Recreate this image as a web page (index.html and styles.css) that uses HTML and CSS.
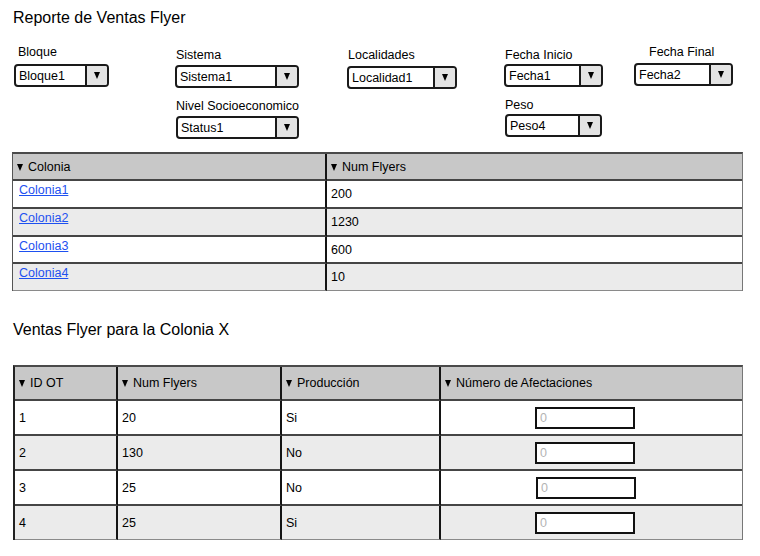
FILE: index.html
```html
<!DOCTYPE html>
<html lang="es">
<head>
<meta charset="utf-8">
<title>Reporte de Ventas Flyer</title>
<link rel="stylesheet" href="styles.css">
</head>
<body>
<div class="page">
  <h1 class="title">Reporte de Ventas Flyer</h1>

  <div class="filters">
    <div class="fcol col1">
      <div class="field f-bloque">
        <div class="label">Bloque</div>
        <div class="select w-bloque"><span class="value">Bloque1</span><span class="btn"><i class="tri"></i></span></div>
      </div>
    </div>
    <div class="fcol col2">
      <div class="field f-sistema">
        <div class="label">Sistema</div>
        <div class="select w-sistema"><span class="value">Sistema1</span><span class="btn"><i class="tri"></i></span></div>
      </div>
      <div class="field f-nivel">
        <div class="label">Nivel Socioeconomico</div>
        <div class="select w-nivel"><span class="value">Status1</span><span class="btn"><i class="tri"></i></span></div>
      </div>
    </div>
    <div class="fcol col3">
      <div class="field f-local">
        <div class="label">Localidades</div>
        <div class="select w-local"><span class="value">Localidad1</span><span class="btn"><i class="tri"></i></span></div>
      </div>
    </div>
    <div class="fcol col4">
      <div class="field f-inicio">
        <div class="label">Fecha Inicio</div>
        <div class="select w-fecha"><span class="value">Fecha1</span><span class="btn"><i class="tri"></i></span></div>
      </div>
      <div class="field f-peso">
        <div class="label">Peso</div>
        <div class="select w-peso"><span class="value">Peso4</span><span class="btn"><i class="tri"></i></span></div>
      </div>
    </div>
    <div class="fcol col5">
      <div class="field f-final">
        <div class="label">Fecha Final</div>
        <div class="select w-fecha"><span class="value">Fecha2</span><span class="btn"><i class="tri"></i></span></div>
      </div>
    </div>
  </div>

  <table class="grid t1">
    <colgroup><col class="t1c1"><col></colgroup>
    <thead>
      <tr><th><i class="tri"></i>Colonia</th><th><i class="tri"></i>Num Flyers</th></tr>
    </thead>
    <tbody>
      <tr class="r1"><td class="linkcell"><a href="#">Colonia1</a></td><td>200</td></tr>
      <tr class="alt r2"><td class="linkcell"><a href="#">Colonia2</a></td><td>1230</td></tr>
      <tr class="r3"><td class="linkcell"><a href="#">Colonia3</a></td><td>600</td></tr>
      <tr class="alt r4 last"><td class="linkcell"><a href="#">Colonia4</a></td><td>10</td></tr>
    </tbody>
  </table>

  <h2 class="subtitle">Ventas Flyer para la Colonia X</h2>

  <table class="grid t2">
    <colgroup><col class="t2c1"><col class="t2c2"><col class="t2c3"><col></colgroup>
    <thead>
      <tr><th><i class="tri"></i>ID OT</th><th><i class="tri"></i>Num Flyers</th><th><i class="tri"></i>Producción</th><th><i class="tri"></i>Número de Afectaciones</th></tr>
    </thead>
    <tbody>
      <tr><td>1</td><td>20</td><td>Si</td><td class="inputcell"><input class="num" type="text" placeholder="0"></td></tr>
      <tr class="alt"><td>2</td><td>130</td><td>No</td><td class="inputcell"><input class="num" type="text" placeholder="0"></td></tr>
      <tr><td>3</td><td>25</td><td>No</td><td class="inputcell"><input class="num shifted" type="text" placeholder="0"></td></tr>
      <tr class="alt last"><td>4</td><td>25</td><td>Si</td><td class="inputcell"><input class="num" type="text" placeholder="0"></td></tr>
    </tbody>
  </table>
</div>
</body>
</html>
```

FILE: styles.css
```css
* { box-sizing: border-box; }

html, body {
  margin: 0;
  padding: 0;
  background: #fff;
}

body {
  font-family: "Liberation Sans", Arial, Helvetica, sans-serif;
  font-size: 12.5px;
  color: #000;
}

.page {
  padding: 8px 0 0 12px;
}

.title,
.subtitle {
  margin: 0;
  font-size: 16px;
  font-weight: normal;
  line-height: 20px;
}

.title { padding-left: 1px; }

/* ---------- filters ---------- */
.filters {
  display: flex;
  align-items: flex-start;
}

.fcol {
  display: flex;
  flex-direction: column;
}

.col1 { width: 163px; }
.col2 { width: 172px; }
.col3 { width: 157px; }
.col4 { width: 130px; }
.col5 { width: 110px; }

.field { display: flex; flex-direction: column; }

.label {
  line-height: 15px;
  height: 15px;
  white-space: nowrap;
}

.f-bloque { margin-top: 17px; margin-left: 2px; }
.f-bloque .label { padding-left: 4px; margin-bottom: 4px; }

.f-sistema { margin-top: 19.5px; }
.f-sistema .label { padding-left: 1px; margin-bottom: 2.5px; }

.f-nivel { margin-top: 11px; margin-left: 1px; }
.f-nivel .label { margin-bottom: 2px; }

.f-local { margin-top: 19.5px; }
.f-local .label { padding-left: 1px; margin-bottom: 3.5px; }

.f-inicio { margin-top: 19.5px; }
.f-inicio .label { padding-left: 1px; margin-bottom: 1.5px; }

.f-peso { margin-top: 10.5px; margin-left: 1px; }
.f-peso .label { margin-bottom: 1.5px; }

.f-final { margin-top: 16.5px; }
.f-final .label { padding-left: 15px; margin-bottom: 3.5px; }

.select {
  display: flex;
  align-items: stretch;
  height: 23px;
  border: 2px solid #1a1a1a;
  border-radius: 4px;
  background: #fff;
  overflow: hidden;
}

.select .value {
  flex: 1;
  display: flex;
  align-items: center;
  padding-left: 3px;
  font-size: 12.5px;
  white-space: nowrap;
  overflow: hidden;
}

.select .btn {
  width: 22px;
  border-left: 2px solid #1a1a1a;
  background: #e3e3e3;
  display: flex;
  align-items: center;
  justify-content: center;
}

.select .btn .tri { margin: 0; }

.w-bloque { width: 95px; }
.w-sistema { width: 124px; }
.w-nivel { width: 123px; }
.w-local { width: 110px; }
.w-fecha { width: 99px; }
.w-peso { width: 97px; }

.tri {
  display: inline-block;
  width: 0;
  height: 0;
  border-left: 3.5px solid transparent;
  border-right: 3.5px solid transparent;
  border-top: 7px solid #000;
  margin-right: 5px;
  vertical-align: 0px;
}

/* ---------- tables ---------- */
.grid {
  border-collapse: separate;
  border-spacing: 0;
  table-layout: fixed;
  border-top: 2px solid #4a4a4a;
  border-left: 1px solid #555;
  border-right: 1px solid #777;
}

.grid th,
.grid td {
  padding: 0 4px;
  text-align: left;
  font-weight: normal;
  white-space: nowrap;
  vertical-align: middle;
  border-bottom: 2px solid #454545;
}

.grid th:not(:last-child),
.grid td:not(:last-child) {
  border-right: 2px solid #141414;
}

.grid th { background: #c8c8c8; }
.grid tr.alt td { background: #ebebeb; }
.grid tr.last td { border-bottom: 1px solid #8a8a8a; }

.t1 {
  width: 731px;
  margin-top: 13px;
}

.t1c1 { width: 314px; }

.t1 th { height: 27px; }
.t1 td { height: 28px; }
.t1 tr.r3 td { height: 27px; }
.t1 tr.last td { height: 27px; }

.t1 td.linkcell {
  vertical-align: top;
  padding-top: 2px;
  padding-left: 6px;
}

.t1 a {
  color: #1d50f0;
  text-decoration: underline;
  line-height: 14px;
}

.subtitle {
  margin-top: 29px;
  padding-left: 1px;
}

.t2 {
  width: 730px;
  margin-top: 25px;
  margin-left: 1px;
  border-left: 2px solid #222;
}

.t2c1 { width: 103px; }
.t2c2 { width: 164px; }
.t2c3 { width: 159px; }

.t2 th { height: 34px; }
.t2 td { height: 35px; }
.t2 tr.last td { height: 34px; }

.t2 td.inputcell { padding-left: 94px; }

.num {
  display: block;
  width: 100px;
  height: 22px;
  margin: 0;
  padding: 0 3px;
  border: 2px solid #111;
  border-radius: 0;
  background: #fff;
  font-family: "Liberation Sans", Arial, sans-serif;
  font-size: 12.5px;
  color: #000;
  outline: none;
}

.num.shifted { margin-left: 1px; }

.num::placeholder { color: #b4b4b4; }
```
